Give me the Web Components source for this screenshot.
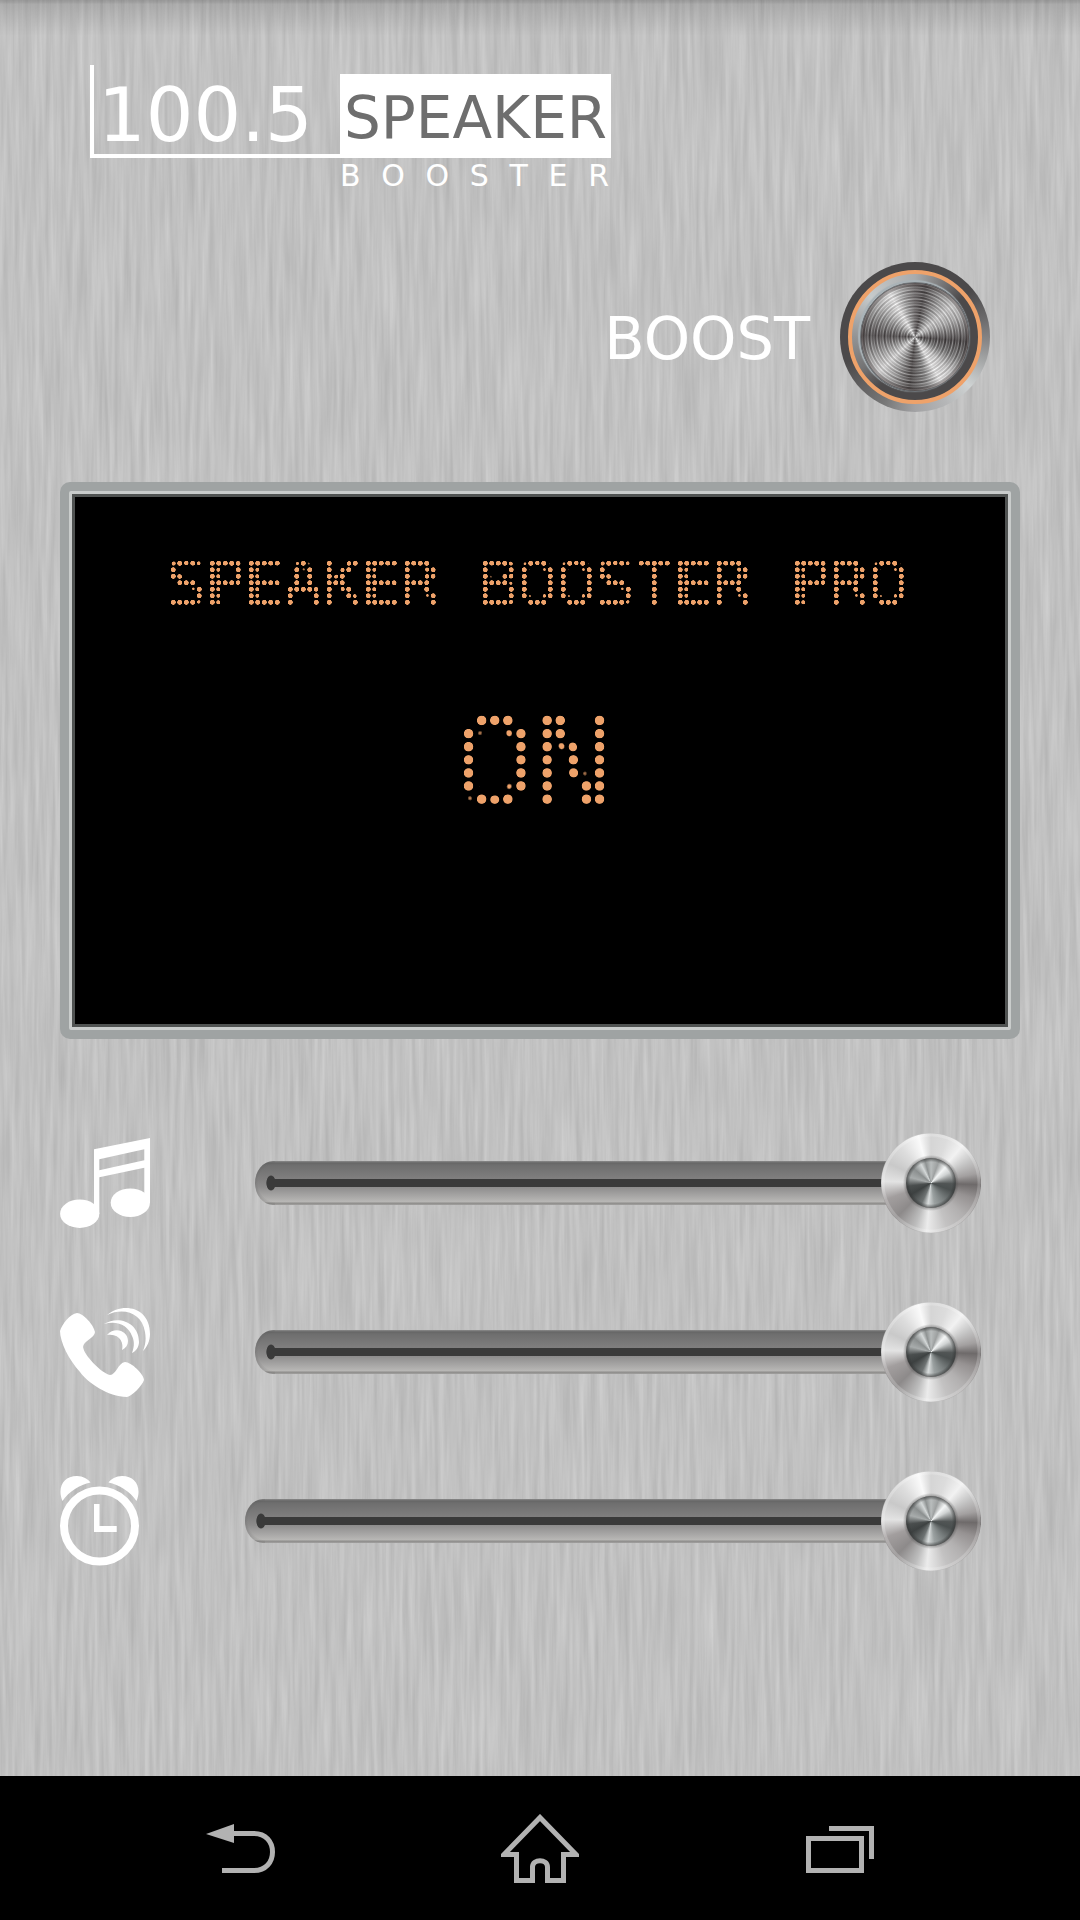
<!DOCTYPE html>
<html lang="en">
<head>
<meta charset="utf-8">
<meta name="viewport" content="width=device-width, initial-scale=1">
<title>Speaker Booster Pro</title>
<style>
  body { margin: 0; background: #c2c2c2; font-family: "DejaVu Sans", sans-serif; }
</style>
</head>
<body>
<booster-app>
  <booster-logo slot="header"></booster-logo>
  <boost-switch>BOOST</boost-switch>
  <lcd-panel>
    <led-text size="65" text="SPEAKER BOOSTER PRO"></led-text>
    <led-text size="131" text="ON"></led-text>
  </lcd-panel>
  <slider-bank>
    <volume-slider name="Music volume">
      <svg width="90" height="90" viewBox="0 0 90 90" fill="#fff"><path fill-rule="evenodd" d="M34 11.3 90 0V65H84.300V29.700L39.300 39.300V76H34ZM39.300 21.300V32.300L84.300 22.300V11.300Z"/><ellipse cx="70.300" cy="64.700" rx="19.600" ry="14.300"/><ellipse cx="19.700" cy="75.700" rx="19.600" ry="14.200"/></svg>
    </volume-slider>
    <volume-slider name="Call volume">
      <svg width="90" height="90" viewBox="0 0 90 90" fill="#fff"><path d="M0 24C2 17 10 7 17 6C23 6 34 18 35 25C35 31 23 34 23 40C24 48 41 66 50 68C56 68 58 56 65 55C71 55 84 67 84 73C82 79 72 89 67 90C48 90 27 75 20 65C9 53 0 35 0 24Z"/><path d="M47 8C62-5 90-1 90 27C90 34 87 40 83 44C86 36 86 31 85 25C82 6 64 0 47 8Z"/><path d="M44 17C58 8 79 15 79 35C79 40 76 44 72 46C75 38 74 33 72 29C68 18 57 13 44 17Z"/><path d="M47 28C55 19 68 24 68 34C68 38 66 41 62 43C64 36 60 26 47 28Z"/></svg>
    </volume-slider>
    <volume-slider name="Alarm volume">
      <svg width="80" height="90" viewBox="0 0 80 90" fill="#fff"><circle cx="39.500" cy="50" r="35.500" fill="none" stroke="#fff" stroke-width="8"/><path d="M34 28H39.500V50H56.700V56H34Z"/><path d="M2.500 25C-3 12 3 0 17 0C23 0 28 3 30.500 6.500C20 9 9 15 2.500 25Z"/><path d="M76.500 25C82 12 76 0 62 0C56 0 51 3 48.500 6.500C59 9 70 15 76.500 25Z"/></svg>
    </volume-slider>
  </slider-bank>
  <system-bar slot="footer"></system-bar>
</booster-app>

<script>
const define = (name, html, setup) => {
  const template = document.createElement('template');
  template.innerHTML = html;
  customElements.define(name, class extends HTMLElement {
    constructor() {
      super();
      this.attachShadow({ mode: 'open' }).append(template.content.cloneNode(true));
    }
    connectedCallback() { if (setup) setup(this, this.shadowRoot); }
  });
};

/* Page shell: brushed metal sheet behind a column of content */
define('booster-app', `
  <style>
    :host { display: flex; flex-direction: column; min-height: 100vh; position: relative; isolation: isolate; overflow: hidden; }
    .metal { position: absolute; inset: 0; width: 100%; height: 100%; z-index: -1; }
    header { padding: 65px 90px 0; }
    main { display: flex; flex-direction: column; padding: 68px 60px 60px; }
    footer { margin-top: auto; }
    .shade { position: absolute; inset: 0 0 auto; height: 36px; z-index: -1;
      background: linear-gradient(rgba(0,0,0,.22), rgba(0,0,0,.16) 3px, rgba(0,0,0,.12) 4px, transparent); }
  </style>
  <svg class="metal" aria-hidden="true">
    <filter id="brushed" x="0" y="0" width="100%" height="100%" color-interpolation-filters="sRGB">
      <feTurbulence type="fractalNoise" baseFrequency="0.2 0.009" numOctaves="3" seed="7"/>
      <feColorMatrix values=".13 0 0 0 .692  .13 0 0 0 .692  .13 0 0 0 .692  0 0 0 0 1"/>
    </filter>
    <rect width="100%" height="100%" filter="url(#brushed)"/>
  </svg>
  <div class="shade"></div>
  <header><slot name="header"></slot></header>
  <main><slot></slot></main>
  <footer><slot name="footer"></slot></footer>
`);

define('booster-logo', `
  <style>
    :host { display: inline-grid; grid-template-columns: 250px auto; align-items: end; color: #fff; }
    .ratio { box-sizing: border-box; height: 93px; padding: 12px 0 0 4px; border: solid #fff; border-width: 0 0 4px 4px; font-size: 75px; line-height: 77px; }
    .name { padding: 4px 4px 0; background: #fff; color: #6e6e6e; font-size: 58px; line-height: 80px; }
    .sub { grid-column: 2; display: flex; justify-content: space-between; padding: 0 2px 0 0; font-size: 30px; line-height: 36px; }
  </style>
  <div class="ratio">100.5</div>
  <div class="name">SPEAKER</div>
  <div class="sub"><span>B</span><span>O</span><span>O</span><span>S</span><span>T</span><span>E</span><span>R</span></div>
`);

define('boost-switch', `
  <style>
    :host { display: flex; align-items: center; justify-content: flex-end; gap: 30px; padding-right: 30px; color: #fff; }
    label { padding-top: 4px; font-size: 59px; line-height: 72px; }
    button { display: block; padding: 0; border: 0; background: none; border-radius: 50%; }
    .rim { display: grid; place-items: center; width: 150px; height: 150px; border-radius: 50%;
      background: conic-gradient(#4b494a 0 50deg, #6b6a6b 75deg, #8a8a8b 95deg, #cfd3d3 132deg, #b5b6b7 155deg, #a2a2a4 180deg, #777 205deg, #4b494a 250deg, #4b494a); }
    .glow { box-sizing: border-box; display: grid; place-items: center; width: 134px; height: 134px; border-radius: 50%; border: 4px solid #eea26a;
      background: conic-gradient(#a9abac, #858586 20deg, #4b494a 50deg 215deg, #747475 240deg, #929394 270deg, #c6cacb 312deg, #a9abac); }
    .cap { box-sizing: border-box; width: 110px; height: 110px; border-radius: 50%; border: 1px solid #6e7478;
      box-shadow: -1px -1px 1px 1px #a9b3b8;
      background:
        radial-gradient(circle, transparent 50px, rgba(60,50,50,.6) 54px),
        repeating-radial-gradient(circle, rgba(30,25,25,.16) 0 1px, rgba(255,255,255,.26) 2px, rgba(30,25,25,.16) 3px),
        repeating-radial-gradient(circle, rgba(30,25,25,.12) 0 1px, rgba(255,255,255,.16) 3px, rgba(30,25,25,.12) 5px),
        conic-gradient(#6a6667, #494546 12deg, #aaa 35deg, #ddd 50deg, #bbb 66deg, #3e3a3b 95deg, #777 115deg, #ddd 135deg, #fff 150deg, #888 166deg, #464242 186deg, #aaa 208deg, #eee 226deg, #aaa 246deg, #484445 272deg, #999 300deg, #fff 330deg, #aaa 345deg, #6a6667); }
  </style>
  <label for="power"><slot></slot></label>
  <button id="power" type="button" aria-pressed="true"><span class="rim"><span class="glow"><span class="cap"></span></span></span></button>
`);

define('lcd-panel', `
  <style>
    :host { display: block; margin-top: 70px; border: 9px solid #9fa3a3; border-radius: 10px; background: #9fa3a3; }
    .bezel { border: 3px solid #c9cccb; border-radius: 2px; }
    .screen { display: flex; flex-direction: column; align-items: center; gap: 108px; padding: 63px 20px 218px; border: 3px solid #505352; background: #000; color: #eea26a; }
  </style>
  <div class="bezel"><div class="screen"><slot></slot></div></div>
`);

/* LED text: the type shows through a 5x7 grid of points per letter, and the filter swells each lit point into a round lamp */
define('led-text', `
  <style>
    :host { display: block; }
    svg { display: block; overflow: visible; }
    text { font-family: "DejaVu Sans Mono", monospace; text-rendering: geometricPrecision; }
  </style>
  <svg role="img">
    <defs>
      <mask id="grid" maskUnits="userSpaceOnUse"></mask>
      <filter id="lamps" filterUnits="userSpaceOnUse" color-interpolation-filters="sRGB">
        <feGaussianBlur/>
        <feComponentTransfer result="mask"><feFuncA type="linear" slope="20" intercept="-1.2"/></feComponentTransfer>
        <feFlood flood-color="#eea26a"/>
        <feComposite operator="in" in2="mask"/>
      </filter>
    </defs>
    <g filter="url(#lamps)"><text mask="url(#grid)" fill="#eea26a" stroke="#eea26a"></text></g>
  </svg>
`, (host, root) => {
  const size = +host.getAttribute('size');
  const text = host.getAttribute('text');
  const pitch = size / 10;
  const width = Math.round(pitch * 6 * text.length);
  const height = Math.round(pitch * 7);
  const set = (selector, attrs) => {
    for (const [k, v] of Object.entries(attrs)) root.querySelector(selector).setAttribute(k, v);
  };
  set('svg', { width, height, 'aria-label': text });
  const box = { x: -10, y: -10, width: width + 20, height: height + 20 };
  set('mask', box);
  set('filter', box);
  set('feGaussianBlur', { stdDeviation: size / 56 });
  set('text', {
    x: [...text].map((_, i) => pitch * 6 * i - size * 0.053).join(' '),
    y: size * 0.715, 'font-size': size, 'stroke-width': size * 0.018
  });
  root.querySelector('text').textContent = text;
  let points = '';
  for (let col = 0; col < text.length * 6; col++) {
    if (col % 6 === 5) continue;
    for (let row = 0; row < 7; row++)
      points += `<circle cx="${pitch * (col + 0.5)}" cy="${pitch * (row + 0.5)}" r="${size / 54}" fill="#fff"/>`;
  }
  root.querySelector('mask').innerHTML = points;
});

define('slider-bank', `
  <style>:host { display: flex; flex-direction: column; gap: 69px; padding: 94px 39px 0 0; }</style>
  <slot></slot>
`);

define('volume-slider', `
  <style>
    :host { display: block; }
    label { display: flex; align-items: center; gap: 105px; height: 100px; }
    ::slotted(svg) { display: block; flex: none; }
    .control { flex: 1; min-width: 0; display: grid; }
    .control > * { grid-area: 1 / 1; }
    input { appearance: none; -webkit-appearance: none; width: 100%; height: 100px; margin: 0; background: none; }
    input::-webkit-slider-runnable-track { height: 44px; border-radius: 18px 22px 22px 18px / 22px;
      background:
        radial-gradient(ellipse 5px 8px at 16px 22px, #3a3a3a 85%, transparent),
        linear-gradient(#3a3a3a, #3a3a3a) 16px 18px / 100% 8px no-repeat,
        radial-gradient(circle at 22px 22px, transparent 19px, rgba(90,90,90,.2) 22px) 0 0 / 20px 100% no-repeat,
        linear-gradient(#8b8b8b, #666 2px, #6e6e6e 4px, #807f7f 18px, #8d8c8c 26px, #aaa9a8 36px, #b9b8b6 41px, #8c8b89 42px, #a2a1a0 44px); }
    input::-webkit-slider-thumb { -webkit-appearance: none; width: 100px; height: 100px; margin-top: -28px; border-radius: 50%; border: 0; background: none; }
    .knob { display: grid; place-items: center; width: 100px; height: 100px; border-radius: 50%; pointer-events: none;
      margin-left: calc((100% - 100px) * var(--value, 1)); z-index: 1;
      background:
        radial-gradient(circle, rgba(70,70,70,.5) 24px, transparent 28px),
        radial-gradient(circle, transparent 46px, rgba(255,255,255,.2) 47px 49px, rgba(150,150,150,.3) 50px),
        conic-gradient(#d5d5d5, #dcdcdc 20deg, #f2f2f2 40deg, #c6c6c6 60deg, #a3a0a0 78deg, #6e6a6a 92deg, #969292 110deg, #b2b0b0 135deg, #c3c2c2 160deg, #ebebeb 185deg, #bdbdbd 200deg, #8d8a8a 225deg, #a29e9e 250deg, #e3e3e3 272deg, #c9c9c9 295deg, #ddd 320deg, #fafafa 345deg, #d5d5d5); }
    .dimple { width: 50px; height: 50px; border-radius: 50%;
      background:
        radial-gradient(circle, transparent 21px, rgba(50,52,52,.5) 24px, rgba(70,70,70,.8) 25px),
        conic-gradient(#b9bdbd, #9da0a0 20deg, #f4f6f6 42deg, #d0d3d3 60deg, #515555 92deg, #4a4f4f 110deg, #7c8282 145deg, #9ba1a1 170deg, #d8dcdc 188deg, #6d7272 205deg, #3d4141 240deg, #4a4e4e 262deg, #a8acac 285deg, #8b8f8f 310deg, #d4d8d8 332deg, #8f9393 345deg, #b9bdbd); }
  </style>
  <label><slot></slot><span class="control"><input type="range" min="0" max="100" value="100"><span class="knob"><span class="dimple"></span></span></span></label>
`, (host, root) => {
  const input = root.querySelector('input');
  input.setAttribute('aria-label', host.getAttribute('name'));
  input.addEventListener('input', () => host.style.setProperty('--value', input.value / 100));
});

define('system-bar', `
  <style>
    :host { display: block; background: #000; }
    nav { box-sizing: border-box; display: flex; height: 144px; padding: 2px 90px 0; }
    button { flex: 1; display: grid; place-items: center; padding: 0; border: 0; background: none; }
    svg { display: block; fill: none; stroke: #b2b2b2; stroke-width: 5; }
  </style>
  <nav>
    <button type="button" aria-label="Back"><svg width="70" height="50" viewBox="0 0 70 50"><path d="M1 10 29 0V19Z" fill="#b2b2b2" stroke="none"/><path d="M28 9.500H49C61 9.500 67.500 18 67.500 28S61 46.500 49 46.500H17"/></svg></button>
    <button type="button" aria-label="Home"><svg width="78" height="70" viewBox="0 0 78 70"><path d="M39 3.500 3 40.500H15.500V66.500H31.500V53C31.500 44.500 46.500 44.500 46.500 53V66.500H62.500V40.500H75Z"/></svg></button>
    <button type="button" aria-label="Recent apps"><svg width="68" height="47" viewBox="0 0 68 47"><rect x="2.500" y="12.500" width="53" height="32"/><path d="M23 2.500H65.500V33"/></svg></button>
  </nav>
`);
</script>
</body>
</html>
